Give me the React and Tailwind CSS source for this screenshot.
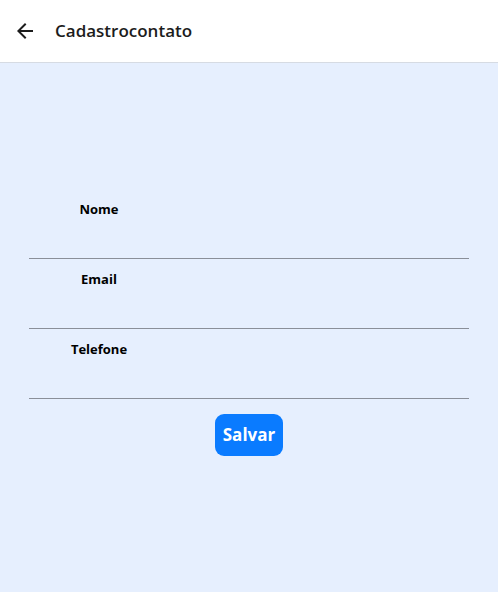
export default function App() {
  const fields = ['Nome', 'Email', 'Telefone']
  return (
    <div className="flex h-[592px] w-[498px] flex-col bg-[#e6effe]" style={{ fontFamily: '"Open Sans", "Noto Sans", sans-serif' }}>
      <header className="flex h-[63px] shrink-0 items-center border-b border-[#d6dbe3] bg-white">
        <svg className="ml-[13px] h-6 w-6 text-[#1c1c1c]" viewBox="0 0 24 24" fill="currentColor">
          <path d="M20 11H7.83l5.59-5.59L12 4l-8 8 8 8 1.41-1.41L7.83 13H20v-2z" />
        </svg>
        <h1 className="ml-[18px] text-[17px] font-semibold text-[#1c1c1c]">Cadastrocontato</h1>
      </header>
      <main className="flex flex-1 flex-col justify-center px-[29px] pb-[10px]">
        <form className="flex flex-col" onSubmit={(e) => e.preventDefault()}>
          {fields.map((f) => (
            <div key={f} className="flex h-[70px] flex-col border-b border-[#8a8f99]">
              <label className="w-[140px] pt-[11px] text-center text-[13px] font-bold text-black">{f}</label>
              <input className="flex-1 bg-transparent outline-none" />
            </div>
          ))}
          <div className="mt-[15px] flex justify-center">
            <button type="submit" className="h-[42px] w-[68px] rounded-[9px] bg-[#0a7bff] text-[17px] font-bold text-white">
              Salvar
            </button>
          </div>
        </form>
      </main>
    </div>
  )
}
